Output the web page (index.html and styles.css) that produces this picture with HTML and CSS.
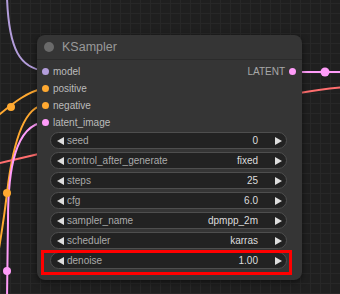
FILE: index.html
```html
<!DOCTYPE html>
<html lang="en">
<head>
  <meta charset="UTF-8">
  <title>KSampler</title>
  <link rel="stylesheet" href="styles.css">
</head>
<body>

  <div class="canvas">
    <svg class="links" width="340" height="294" viewBox="0 0 340 294">
      <path d="M7 -2 C9 50, 20 68, 45 71" stroke="#b39ddb" />
      <path d="M-5 118 C10 106, 25 92, 45 88" stroke="#ffa931" />
      <path d="M45 105 C22 106, 12 150, 7 193 S-2 250, -4 270" stroke="#ffa931" />
      <path d="M-5 164 C100 142, 250 95, 345 87" stroke="#ff6e6e" />
      <path d="M45 122 C15 125, 8 170, 8 220 L7 300" stroke="#ff9cf9" />
      <path d="M293 72 L345 72" stroke="#ff9cf9" />
      <circle cx="11" cy="107" r="4" fill="#ffa931" />
      <circle cx="7" cy="193" r="4" fill="#ffa931" />
      <circle cx="7" cy="271" r="4" fill="#ff9cf9" />
      <circle cx="325" cy="72" r="4.5" fill="#ff9cf9" />
    </svg>

    <div class="node">
      <div class="node-title">
        <span class="title-dot"></span>
        <span>KSampler</span>
      </div>

      <div class="slots">
        <div class="slot">
          <span class="slot-in"><i class="dot model"></i>model</span>
          <span class="slot-out">LATENT<i class="dot latent"></i></span>
        </div>
        <div class="slot">
          <span class="slot-in"><i class="dot cond"></i>positive</span>
        </div>
        <div class="slot">
          <span class="slot-in"><i class="dot cond"></i>negative</span>
        </div>
        <div class="slot">
          <span class="slot-in"><i class="dot latent"></i>latent_image</span>
        </div>
      </div>

      <div class="widgets">
        <div class="widget"><i class="arrow-left"></i><span class="label">seed</span><span class="value">0</span><i class="arrow-right"></i></div>
        <div class="widget"><i class="arrow-left"></i><span class="label">control_after_generate</span><span class="value">fixed</span><i class="arrow-right"></i></div>
        <div class="widget"><i class="arrow-left"></i><span class="label">steps</span><span class="value">25</span><i class="arrow-right"></i></div>
        <div class="widget"><i class="arrow-left"></i><span class="label">cfg</span><span class="value">6.0</span><i class="arrow-right"></i></div>
        <div class="widget"><i class="arrow-left"></i><span class="label">sampler_name</span><span class="value">dpmpp_2m</span><i class="arrow-right"></i></div>
        <div class="widget"><i class="arrow-left"></i><span class="label">scheduler</span><span class="value">karras</span><i class="arrow-right"></i></div>
        <div class="widget marked"><i class="arrow-left"></i><span class="label">denoise</span><span class="value">1.00</span><i class="arrow-right"></i></div>
      </div>
    </div>
  </div>

</body>
</html>
```

FILE: styles.css
```css
body {
  margin: 0;
  background: #1f1f1f;
  font-family: 'Liberation Sans', Arial, sans-serif;
}

.canvas {
  position: relative;
  width: 340px;
  height: 294px;
  overflow: hidden;
  background-color: #1f1f1f;
  background-image:
    repeating-linear-gradient(90deg, #272727 0 1px, transparent 1px 10px),
    repeating-linear-gradient(0deg, #272727 0 1px, transparent 1px 10px);
}

.links {
  position: absolute;
  left: 0;
  top: 0;
}

.links path {
  fill: none;
  stroke-width: 2;
}

/* the node sits on the free canvas */
.node {
  position: absolute;
  left: 37px;
  top: 35px;
  width: 265px;
  background: #353535;
  border-radius: 8px;
  box-shadow: 0 2px 6px rgba(0,0,0,0.5);
  padding-bottom: 11px;
}

.node-title {
  display: flex;
  align-items: center;
  height: 24px;
  padding-left: 7px;
  gap: 8px;
  color: #999;
  font-size: 12.5px;
  border-bottom: 1px solid #2b2b2b;
}

.title-dot {
  width: 10px;
  height: 10px;
  border-radius: 50%;
  background: #6a6a6a;
}

.slots {
  padding-top: 3px;
}

.slot {
  display: flex;
  justify-content: space-between;
  align-items: center;
  height: 17px;
  font-size: 10px;
  color: #bbb;
}

.slot-in {
  display: flex;
  align-items: center;
  gap: 4px;
  padding-left: 5px;
}

.slot-out {
  display: flex;
  align-items: center;
  gap: 4px;
  padding-right: 6px;
  color: #a8a8a8;
}

.dot {
  display: block;
  width: 7px;
  height: 7px;
  border-radius: 50%;
}

.dot.model { background: #b39ddb; }
.dot.cond { background: #ffa931; }
.dot.latent { background: #ff9cf9; }

.widgets {
  display: flex;
  flex-direction: column;
  gap: 3px;
  margin: 1px 15px 0 13px;
}

.widget {
  position: relative;
  display: flex;
  align-items: center;
  height: 17px;
  box-sizing: border-box;
  padding: 0 4px 0 6px;
  background: #222;
  border: 1px solid #4e4e4e;
  border-radius: 9px;
  font-size: 10px;
}

.arrow-left {
  width: 0;
  height: 0;
  border-top: 4px solid transparent;
  border-bottom: 4px solid transparent;
  border-right: 7px solid #ddd;
}

.arrow-right {
  width: 0;
  height: 0;
  border-top: 4px solid transparent;
  border-bottom: 4px solid transparent;
  border-left: 7px solid #ddd;
}

.label {
  flex: 1;
  margin-left: 3px;
  color: #aaa;
}

.value {
  margin-right: 17px;
  color: #ddd;
}

.marked::after {
  content: "";
  position: absolute;
  left: -10px;
  top: -3px;
  right: -6px;
  bottom: -7px;
  border: 3px solid #ff0000;
}
```
